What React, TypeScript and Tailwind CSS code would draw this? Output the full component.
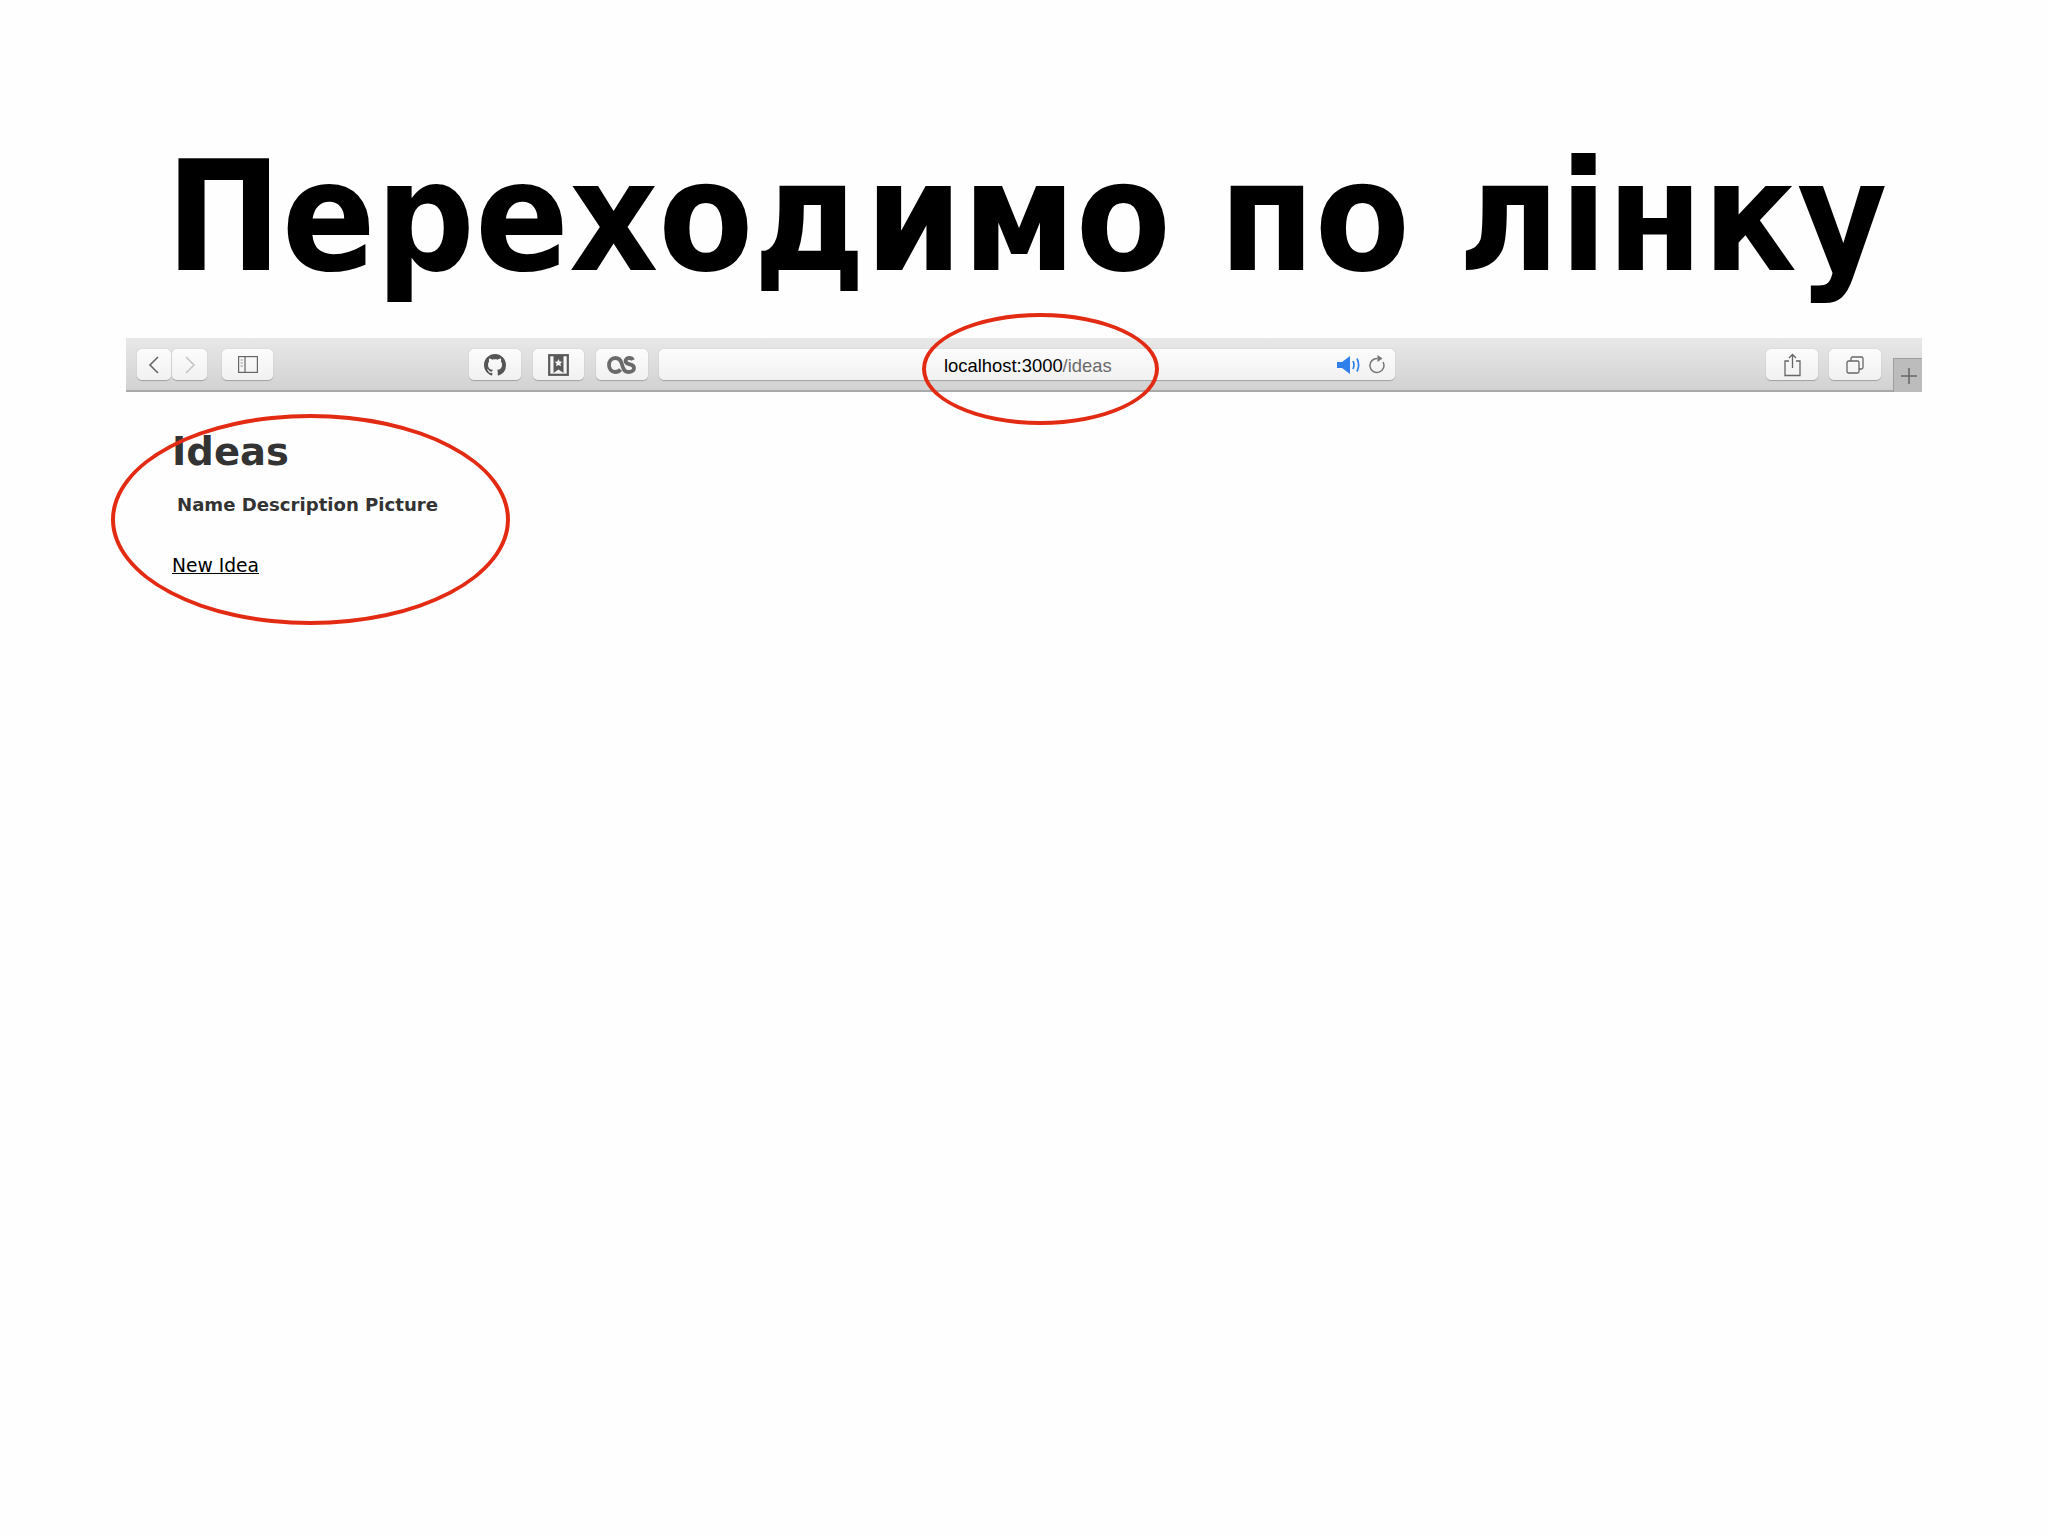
import React from "react";

const btn = "flex h-[31px] items-center justify-center rounded-[5px] bg-gradient-to-b from-[#fcfcfc] to-[#f1f1f1] shadow-[0_0.5px_1px_rgba(0,0,0,0.25)]";

function Github() {
  return (
    <svg width="22" height="22" viewBox="0 0 16 16" fill="#555">
      <path d="M8 0C3.58 0 0 3.58 0 8c0 3.54 2.29 6.53 5.47 7.59.4.07.55-.17.55-.38 0-.19-.01-.82-.01-1.49-2.01.37-2.53-.49-2.69-.94-.09-.23-.48-.94-.82-1.13-.28-.15-.68-.52-.01-.53.63-.01 1.08.58 1.23.82.72 1.21 1.87.87 2.33.66.07-.52.28-.87.51-1.07-1.78-.2-3.64-.89-3.64-3.95 0-.87.31-1.59.82-2.15-.08-.2-.36-1.02.08-2.12 0 0 .67-.21 2.2.82.64-.18 1.32-.27 2-.27s1.36.09 2 .27c1.53-1.04 2.2-.82 2.2-.82.44 1.1.16 1.92.08 2.12.51.56.82 1.27.82 2.15 0 3.07-1.87 3.75-3.65 3.95.29.25.54.73.54 1.48 0 1.07-.01 1.93-.01 2.2 0 .21.15.46.55.38A8.01 8.01 0 0 0 16 8c0-4.42-3.58-8-8-8z" />
    </svg>
  );
}

export default function App() {
  return (
    <div className="relative min-h-[1536px] bg-[#fefefe] pt-[131px] font-['DejaVu_Sans',sans-serif]">
      <h1 className="h-[207px] pl-[5px] text-center font-['DejaVu_Sans_Condensed','DejaVu_Sans',sans-serif] text-[154px] leading-[172px] font-bold whitespace-nowrap text-black [font-stretch:condensed]">Переходимо по лінку</h1>

      <div className="relative ml-[126px] flex h-[54px] w-[1796px] items-start border-b-2 border-[#a9a9a9] bg-gradient-to-b from-[#e8e8e8] to-[#d2d2d2] pt-[11px] pl-[11px]">
        <div className={`${btn} w-[34px]`}>
          <svg width="14" height="20" viewBox="0 0 14 20" fill="none" stroke="#666" strokeWidth="1.6"><path d="M11 2 3 10l8 8" /></svg>
        </div>
        <div className={`${btn} ml-px w-[35px]`}>
          <svg width="14" height="20" viewBox="0 0 14 20" fill="none" stroke="#c4c4c4" strokeWidth="1.6"><path d="m3 2 8 8-8 8" /></svg>
        </div>
        <div className={`${btn} ml-[15px] w-[51px]`}>
          <svg width="20" height="17" viewBox="0 0 20 17" fill="none" stroke="#666" strokeWidth="1.2">
            <rect x="0.6" y="0.6" width="18.8" height="15.8" />
            <path d="M7 1v15" />
            <path d="M2.5 4h2.5M2.5 7h2.5M2.5 10h2.5" stroke="#999" />
          </svg>
        </div>
        <div className={`${btn} ml-[196px] w-[52px]`}><Github /></div>
        <div className={`${btn} ml-[12px] w-[51px]`}>
          <svg width="21" height="22" viewBox="0 0 21 22" fill="none">
            <rect x="1.2" y="1.2" width="18.6" height="19.6" stroke="#5a5a5a" strokeWidth="2.2" />
            <path d="M5.500 2v17l5-3.500 5 3.500V2z" fill="#5a5a5a" />
            <path d="m10.500 5 1.200 2.500 2.600.3-1.900 1.800.5 2.600-2.400-1.300-2.400 1.300.5-2.600-1.900-1.800 2.600-.3z" fill="#f6f6f6" />
          </svg>
        </div>
        <div className={`${btn} ml-[12px] w-[52px]`}>
          <svg width="30" height="18" viewBox="0 0 30 18" fill="none" stroke="#6a6a6a" strokeWidth="3.8">
            <path d="M13.500 13.500C12 15.500 10.500 16 8.500 16 4.500 16 2 13 2 9s2.500-7 6.500-7c3.500 0 5 2 6 5l1.500 4.500c.8 2.700 2.300 4.500 5.500 4.500 3 0 5.500-1.300 5.500-4 0-2.200-1.500-3.200-4-3.700-2.700-.5-4.500-1.200-4.500-3.300 0-2 1.800-3 3.800-3 1.700 0 3 .6 3.700 2" />
          </svg>
        </div>
        <div className={`${btn} relative ml-[11px] w-[736px] justify-start pt-[2px] pl-[285px] font-['Liberation_Sans',sans-serif] text-[18.4px] text-black`}>
          <span>localhost:3000<span className="text-[#6b6b6b]">/ideas</span></span>
          <div className="absolute top-[5px] left-[678px] flex items-center gap-[8px]">
            <svg width="24" height="20" viewBox="0 0 24 20" fill="none">
              <path d="M0 7h5l8-6v18l-8-6H0z" fill="#2f80ed" />
              <path d="M16 6c1.200 2.500 1.200 5.500 0 8M20 3.500c2 4 2 9 0 13" stroke="#2f80ed" strokeWidth="1.700" />
            </svg>
            <svg width="17" height="21" viewBox="0 0 17 21" fill="none">
              <path d="M14 8a7 7 0 1 1-5.500-3.500" stroke="#777" strokeWidth="1.500" />
              <path d="M8.500 1v7l5-3.500z" fill="#777" />
            </svg>
          </div>
        </div>
        <div className={`${btn} ml-[371px] w-[52px]`}>
          <svg width="17" height="24" viewBox="0 0 17 24" fill="none" stroke="#666" strokeWidth="1.300">
            <path d="M5 8H1v14.500h15V8h-4" />
            <path d="M8.500 15V1.500M5 5l3.500-3.500L12 5" />
          </svg>
        </div>
        <div className={`${btn} ml-[11px] w-[52px]`}>
          <svg width="18" height="18" viewBox="0 0 18 18" fill="none" stroke="#666" strokeWidth="1.300">
            <rect x="1" y="5" width="12" height="12" rx="1.500" />
            <path d="M5 5V2.500C5 1.700 5.700 1 6.500 1h9c.8 0 1.500.7 1.500 1.500v9c0 .8-.7 1.500-1.500 1.500H13" />
          </svg>
        </div>
        <div className="absolute right-0 -bottom-[2px] flex h-[34px] w-[29px] items-center justify-center border-t border-l border-[#9f9f9f] bg-[#bcbcbc] pl-[2px]">
          <svg width="16" height="16" viewBox="0 0 16 16" stroke="#666" strokeWidth="1.500"><path d="M8 0v16M0 8h16" /></svg>
        </div>
      </div>

      <div className="pt-[38px] pl-[172px]">
        <h2 className="text-[38.5px] leading-[44px] font-bold text-[#333]">Ideas</h2>
        <div className="mt-[19px] pl-[5px] text-[18.1px] leading-[24px] font-bold text-[#333]">Name Description Picture</div>
        <a className="mt-[37px] block w-fit text-[18.7px] leading-[24px] text-black underline">New Idea</a>
      </div>

      <div className="absolute top-[414px] left-[111px] h-[211px] w-[399px] rounded-[50%] border-[4.5px] border-[#e32a12]" />
      <div className="absolute top-[313px] left-[922px] h-[112px] w-[237px] rounded-[50%] border-[4.5px] border-[#e32a12]" />
    </div>
  );
}
